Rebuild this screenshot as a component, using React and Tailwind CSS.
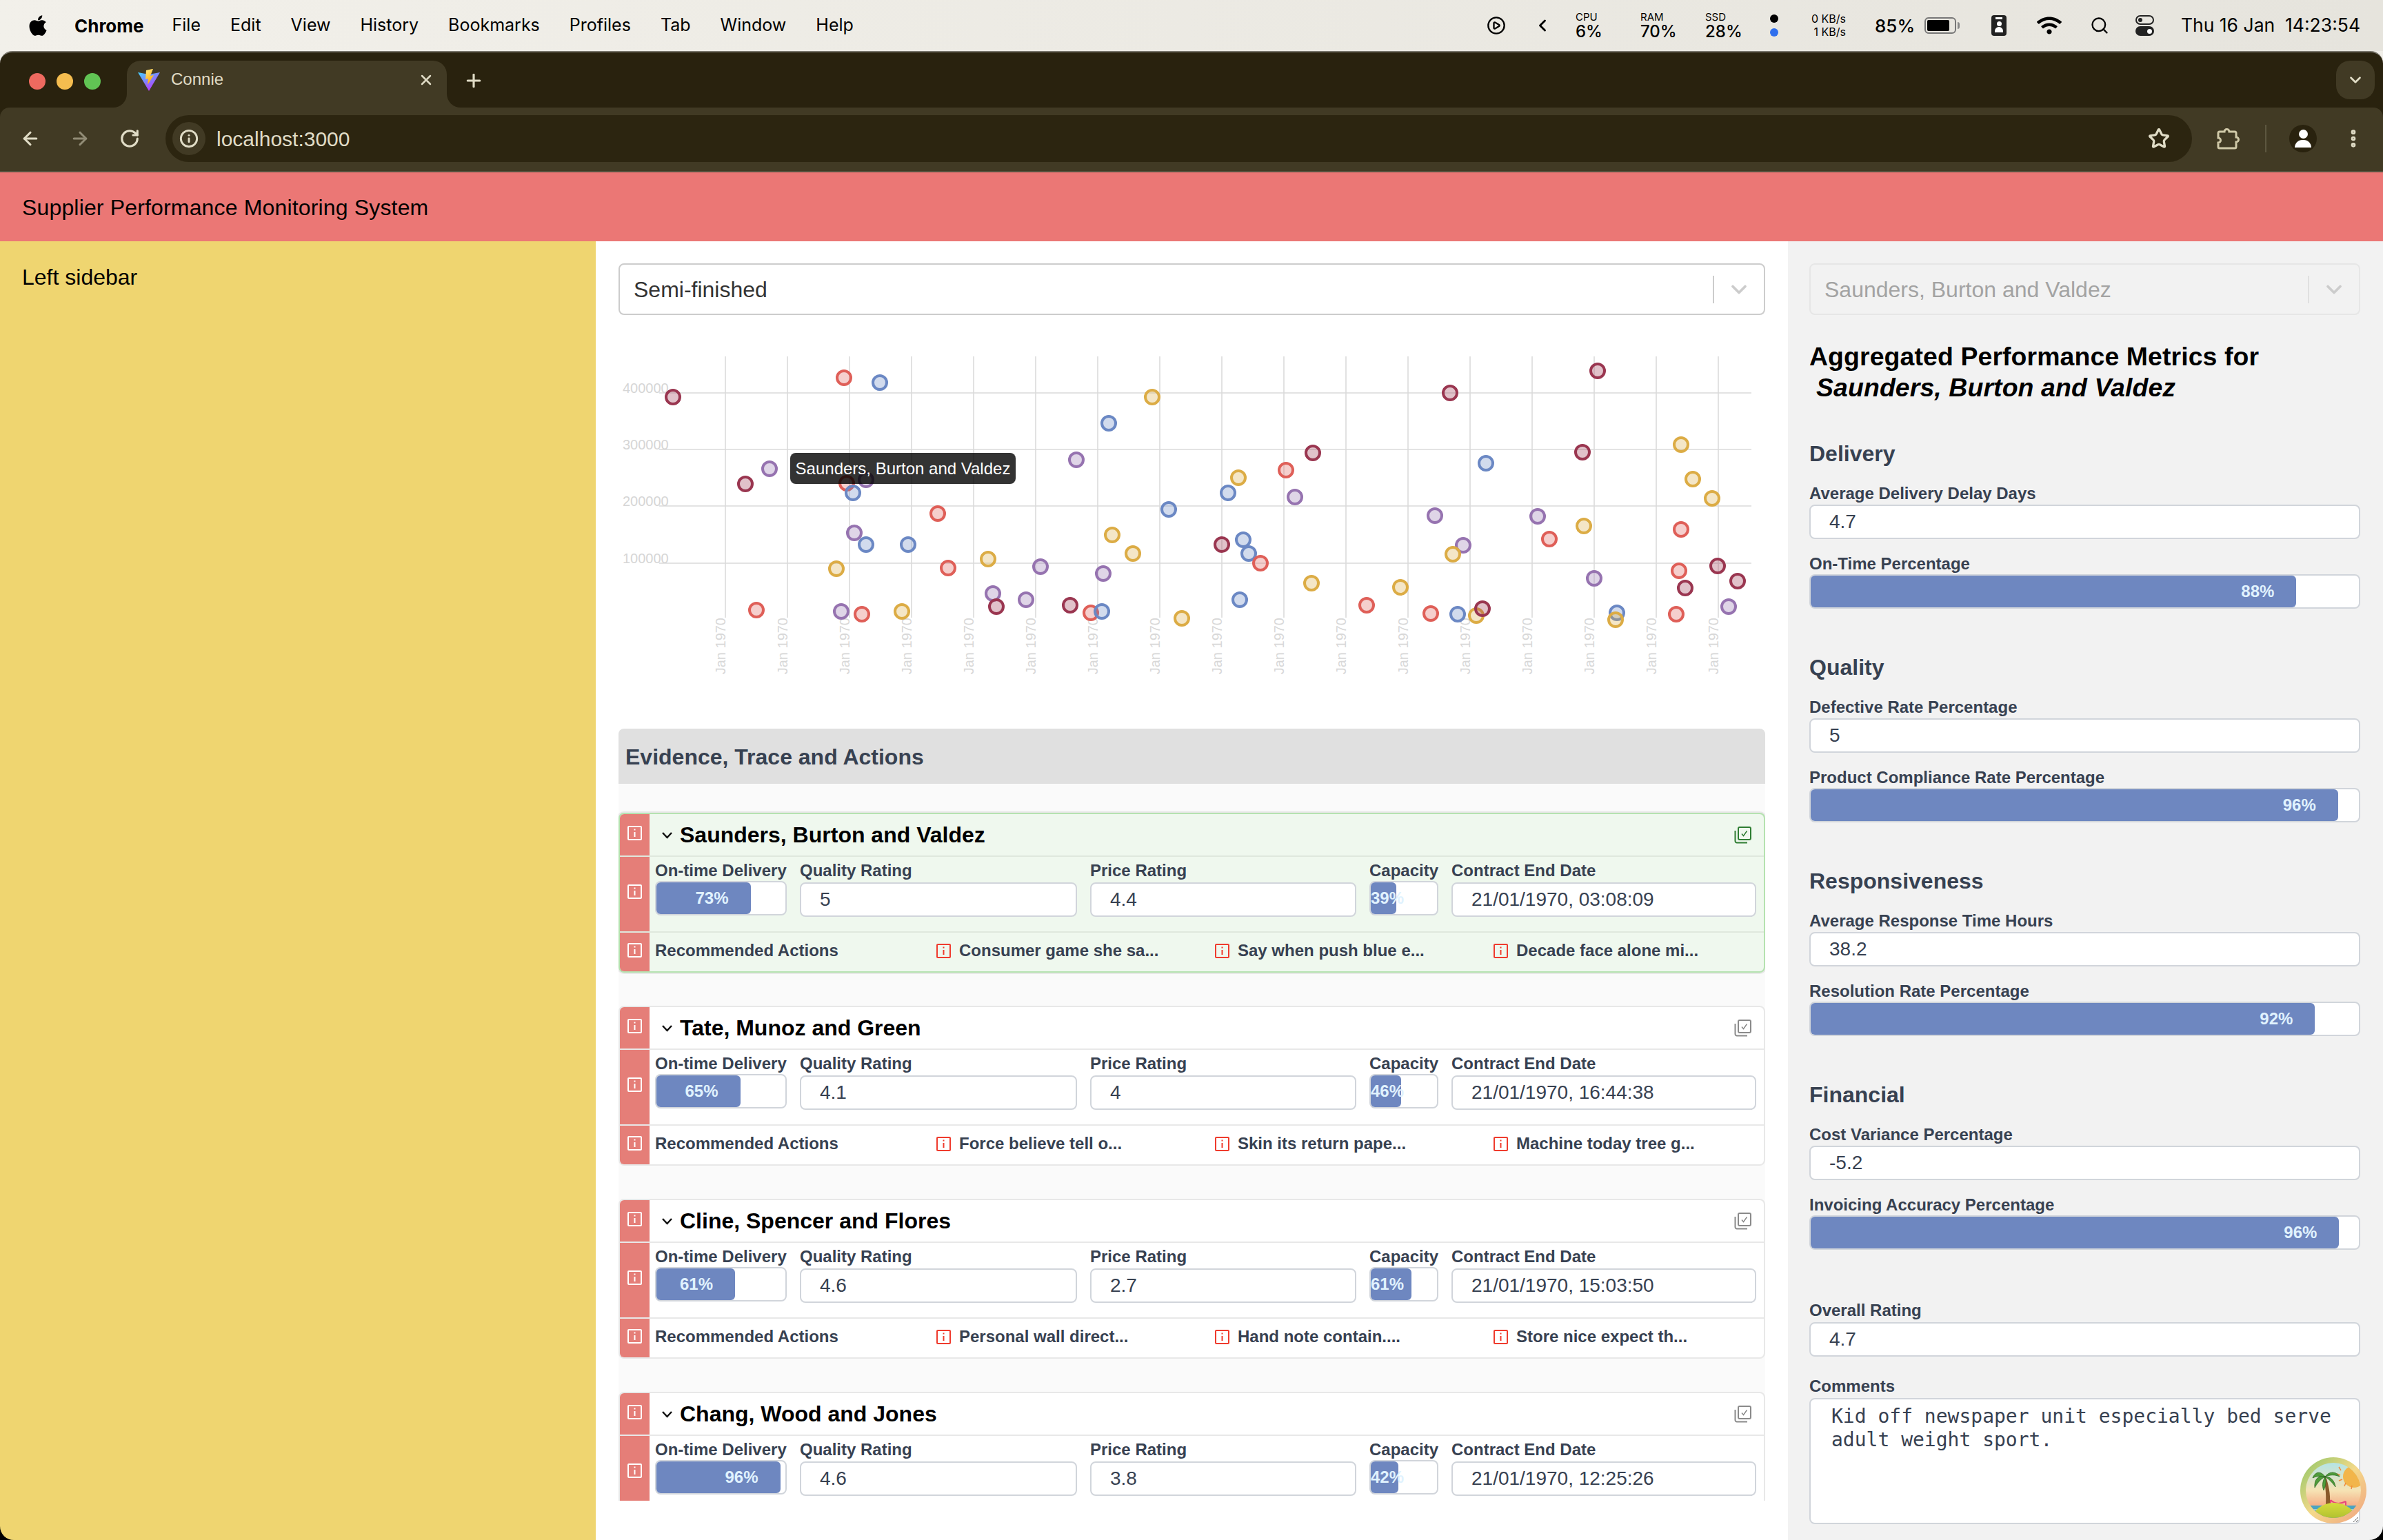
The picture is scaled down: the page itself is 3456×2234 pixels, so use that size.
import { ArrowLeft, ArrowRight, ChevronDown, ChevronLeft, CirclePlay, Ellipsis, Info, Plus, RotateCw, Search, Star, X } from "lucide-react";
import { FaApple, FaWifi } from "react-icons/fa";

const RED = "#df5f58";
const BLUE = "#6b88c4";
const PURPLE = "#9673b0";
const YELLOW = "#dcac45";
const WINE = "#9a3650";

const POINTS = [
  [WINE, 976, 576], [WINE, 1081, 702], [PURPLE, 1116, 680], [RED, 1224, 548], [BLUE, 1276, 555],
  [RED, 1228, 701], [PURPLE, 1256, 696], [BLUE, 1237, 715], [PURPLE, 1239, 773], [BLUE, 1256, 790],
  [BLUE, 1317, 790], [RED, 1360, 745], [RED, 1375, 824], [YELLOW, 1213, 825], [YELLOW, 1433, 811],
  [PURPLE, 1509, 822], [PURPLE, 1600, 832], [PURPLE, 1561, 667], [BLUE, 1608, 614], [YELLOW, 1671, 576],
  [YELLOW, 1613, 776], [YELLOW, 1643, 803], [RED, 1097, 885], [PURPLE, 1220, 887], [RED, 1250, 891],
  [YELLOW, 1308, 887], [PURPLE, 1440, 861], [WINE, 1445, 880], [PURPLE, 1488, 870], [WINE, 1552, 878],
  [RED, 1582, 889], [BLUE, 1598, 887], [YELLOW, 1714, 897], [BLUE, 1695, 739], [BLUE, 1781, 715],
  [YELLOW, 1796, 693], [WINE, 1772, 790], [BLUE, 1803, 783], [BLUE, 1811, 803], [RED, 1828, 817],
  [BLUE, 1798, 870], [RED, 1865, 682], [WINE, 1904, 657], [PURPLE, 1878, 721], [YELLOW, 1902, 846],
  [RED, 1982, 878], [YELLOW, 2031, 852], [RED, 2075, 890], [BLUE, 2114, 891], [YELLOW, 2141, 893],
  [WINE, 2150, 883], [WINE, 2103, 570], [BLUE, 2155, 672], [PURPLE, 2081, 748], [PURPLE, 2122, 791],
  [YELLOW, 2107, 804], [PURPLE, 2230, 749], [RED, 2247, 782], [YELLOW, 2297, 763], [WINE, 2295, 656],
  [WINE, 2317, 538], [PURPLE, 2312, 839], [BLUE, 2345, 889], [YELLOW, 2343, 899], [RED, 2431, 891],
  [RED, 2435, 828], [WINE, 2444, 853], [RED, 2438, 768], [YELLOW, 2438, 645], [YELLOW, 2455, 695],
  [YELLOW, 2483, 723], [WINE, 2491, 821], [WINE, 2520, 843], [PURPLE, 2507, 880],
];

const GRID_X = Array.from({ length: 17 }, (_, i) => 1052 + i * 90);

const SUPPLIERS = [
  {
    name: "Saunders, Burton and Valdez", delivery: 73, quality: "5", price: "4.4", capacity: 39,
    end: "21/01/1970, 03:08:09", selected: true,
    actions: ["Consumer game she sa...", "Say when push blue e...", "Decade face alone mi..."],
  },
  {
    name: "Tate, Munoz and Green", delivery: 65, quality: "4.1", price: "4", capacity: 46,
    end: "21/01/1970, 16:44:38",
    actions: ["Force believe tell o...", "Skin its return pape...", "Machine today tree g..."],
  },
  {
    name: "Cline, Spencer and Flores", delivery: 61, quality: "4.6", price: "2.7", capacity: 61,
    end: "21/01/1970, 15:03:50",
    actions: ["Personal wall direct...", "Hand note contain....", "Store nice expect th..."],
  },
  {
    name: "Chang, Wood and Jones", delivery: 96, quality: "4.6", price: "3.8", capacity: 42,
    end: "21/01/1970, 12:25:26",
    actions: [],
  },
];

const METRICS = [
  { title: "Delivery", first: ["Average Delivery Delay Days", "4.7"], second: ["On-Time Percentage", 88, 88.6] },
  { title: "Quality", first: ["Defective Rate Percentage", "5"], second: ["Product Compliance Rate Percentage", 96, 96.2] },
  { title: "Responsiveness", first: ["Average Response Time Hours", "38.2"], second: ["Resolution Rate Percentage", 92, 92] },
  { title: "Financial", first: ["Cost Variance Percentage", "-5.2"], second: ["Invoicing Accuracy Percentage", 96, 96.4] },
];

function InfoSquare({ color }) {
  return (
    <svg width="21" height="21" viewBox="0 0 21 21" fill="none" stroke={color} strokeWidth="2" className="shrink-0">
      <rect x="1" y="1" width="19" height="19" rx="1" />
      <path d="M10.5 9v7" />
      <path d="M10.5 4.5v2" />
    </svg>
  );
}

function CopyCheck({ color }) {
  return (
    <svg width="25" height="25" viewBox="0 0 25 25" fill="none" stroke={color} strokeWidth="2">
      <rect x="6" y="1" width="18" height="18" rx="2" />
      <path d="M1.5 6v15a2.500 2.500 0 0 0 2.500 2.500h15" />
      <path d="M11 10.500l2.500 3 5-7" strokeWidth="1.500" />
    </svg>
  );
}

function SmallChevron() {
  return (
    <svg width="17" height="11" viewBox="0 0 17 11" fill="none" stroke="#111" strokeWidth="2.500" className="shrink-0">
      <path d="M2 2l6.500 7L15 2" />
    </svg>
  );
}

function Field({ value }) {
  return (
    <div className="flex h-[50px] items-center rounded-lg border-2 border-[#d1d5db] bg-white pl-[27px] text-[28px] text-[#374151]">
      {value}
    </div>
  );
}

function Progress({ value, fill = value }) {
  return (
    <div className="h-[50px] rounded-lg border-2 border-[#d1d5db] bg-white">
      <div
        className="h-full whitespace-nowrap rounded-md bg-[#6e87c0] pr-[32px] text-right text-[24px] leading-[46px] font-bold text-[#e0f2fe]"
        style={{ width: `${fill}%` }}
      >
        {value}%
      </div>
    </div>
  );
}

function SelectBox({ value, muted }) {
  return (
    <div className={`flex h-[75px] items-center rounded-lg border-2 pl-[20px] text-[32px] ${muted ? "border-[#e6e6e6] text-[#a3a3a3]" : "border-[#cccccc] bg-white text-[#333333]"}`}>
      <span className="flex-1">{value}</span>
      <span className={`h-[40px] w-[2px] ${muted ? "bg-[#e0e0e0]" : "bg-[#cccccc]"}`} />
      <ChevronDown size={36} strokeWidth={2.500} className="mx-[18px] text-[#cccccc]" />
    </div>
  );
}

function Chart() {
  return (
    <div className="relative h-[600px] w-[1663px]">
      <svg width="1663" height="600" viewBox="897 458 1663 600" className="block">
        {GRID_X.map((x) => (
          <line key={x} x1={x} x2={x} y1="518" y2="897" stroke="#d8d8d8" strokeWidth="1.500" />
        ))}
        {[571, 653, 735, 818].map((y) => (
          <line key={y} x1="956" x2="2540" y1={y} y2={y} stroke="#dadada" strokeWidth="1.500" />
        ))}
        {[[400000, 571], [300000, 653], [200000, 735], [100000, 818]].map(([label, y]) => (
          <text key={label} x="903" y={y} fontSize="20" fill="#d6d6d6" fontFamily="Liberation Sans">
            {label}
          </text>
        ))}
        {GRID_X.map((x) => (
          <text
            key={x}
            transform={`translate(${x} 897) rotate(-90)`}
            textAnchor="end"
            fontSize="20"
            fill="#d8d8d8"
            fontFamily="Liberation Sans"
          >
            Jan 1970
          </text>
        ))}
        {POINTS.map(([color, x, y], i) => (
          <circle key={i} cx={x} cy={y + 1} r="10" fill={color} fillOpacity="0.3" stroke={color} strokeWidth="4" />
        ))}
      </svg>

      {/* TOOLTIP */}
      <div className="absolute top-[200px] left-[249px] flex h-[45px] w-[327px] items-center justify-center rounded-lg bg-[#000000]/80 text-[24px] whitespace-nowrap text-white">
        Saunders, Burton and Valdez
      </div>
    </div>
  );
}

function SupplierCard({ supplier }) {
  const strip = "flex w-[43px] shrink-0 justify-center bg-[#e57e78]";
  const label = "h-[28px] whitespace-nowrap text-[24px] leading-[28px] font-bold text-[#374151]";

  return (
    <div className={`overflow-hidden rounded-lg border-2 ${supplier.selected ? "border-[#b5e2b0] bg-[#eff8ee] shadow-[0_0_0_2px_#e8e8e8]" : "border-[#e8e8e8] bg-white"}`}>
      {/* HEADER */}
      <div className={`flex h-[62px] border-b-2 ${supplier.selected ? "border-[#dfe8dd]" : "border-[#e8e8e8]"}`}>
        <div className={`${strip} pt-[17px]`}>
          <InfoSquare color="#ffffff" />
        </div>
        <div className="flex flex-1 items-center pr-[18px] pl-[17px]">
          <SmallChevron />
          <span className="ml-[10px] flex-1 text-[32px] font-bold text-black">{supplier.name}</span>
          <CopyCheck color={supplier.selected ? "#2e7d32" : "#8a8a8a"} />
        </div>
      </div>

      {/* STATS */}
      <div className={`flex h-[110px] border-b-2 ${supplier.selected ? "border-[#dfe8dd]" : "border-[#e8e8e8]"}`}>
        <div className={`${strip} pt-[40px]`}>
          <InfoSquare color="#ffffff" />
        </div>
        <div className="flex flex-1 gap-[19px] pt-[6px] pl-[8px]">
          <div className="w-[191px]">
            <div className={label}>On-time Delivery</div>
            <div className="mt-[1px]"><Progress value={supplier.delivery} /></div>
          </div>
          <div className="w-[402px]">
            <div className={label}>Quality Rating</div>
            <div className="mt-[3px]"><Field value={supplier.quality} /></div>
          </div>
          <div className="w-[386px]">
            <div className={label}>Price Rating</div>
            <div className="mt-[3px]"><Field value={supplier.price} /></div>
          </div>
          <div className="w-[100px]">
            <div className={label}>Capacity</div>
            <div className="mt-[1px]"><Progress value={supplier.capacity} /></div>
          </div>
          <div className="w-[442px]">
            <div className={label}>Contract End Date</div>
            <div className="mt-[3px]"><Field value={supplier.end} /></div>
          </div>
        </div>
      </div>

      {/* ACTIONS */}
      {supplier.actions.length > 0 && (
        <div className="flex h-[56px]">
          <div className={`${strip} pt-[15px]`}>
            <InfoSquare color="#ffffff" />
          </div>
          <div className="flex flex-1 items-center pb-[4px] pl-[8px]">
            <div className={`${label} w-[408px]`}>Recommended Actions</div>
            {supplier.actions.map((action) => (
              <div key={action} className="flex w-[404px] items-center gap-[12px]">
                <InfoSquare color="#ef3b2d" />
                <span className={label}>{action}</span>
              </div>
            ))}
          </div>
        </div>
      )}
    </div>
  );
}

function BeachBadge() {
  return (
    <svg width="96" height="96" viewBox="0 0 96 96" className="absolute right-[24px] bottom-[24px]">
      <defs>
        <linearGradient id="ring" x1="0" y1="0" x2="1" y2="1">
          <stop offset="0" stopColor="#8cc665" />
          <stop offset="0.500" stopColor="#f4d98a" />
          <stop offset="1" stopColor="#f0a080" />
        </linearGradient>
        <linearGradient id="sky" x1="0" y1="0" x2="0" y2="1">
          <stop offset="0" stopColor="#a8e4ee" />
          <stop offset="0.500" stopColor="#f6e3b4" />
          <stop offset="0.800" stopColor="#f4a07a" />
        </linearGradient>
        <linearGradient id="hill" x1="0" y1="0" x2="0" y2="1">
          <stop offset="0" stopColor="#d7dc3c" />
          <stop offset="1" stopColor="#7f9e1f" />
        </linearGradient>
        <clipPath id="inner">
          <circle cx="48" cy="48" r="40" />
        </clipPath>
      </defs>
      <circle cx="48" cy="48" r="48" fill="url(#ring)" />
      <g clipPath="url(#inner)">
        <rect width="96" height="96" fill="url(#sky)" />
        <circle cx="78" cy="28" r="16" fill="#f2b54a" />
        <path d="M56 14l3 5M53 24l5 2M56 34l5-2M64 42l2-5M74 46l1-5" stroke="#f08a3c" strokeWidth="1.500" />
        <path d="M34 28c2 14 4 24 3 40h6c1-16-2-28-6-40z" fill="#8a5a2b" />
        <path d="M36 28c-6-8-14-8-18 2 6-3 10-3 18-2zM36 28c-10-2-16 4-15 16 4-7 8-12 15-16zM36 28c-3 6-5 12-2 20 3-7 4-13 2-20zM36 28c6-8 16-8 21 0-7-3-13-3-21 0zM36 28c8 0 14 6 15 15-5-7-9-11-15-15z" fill="#4f9c3a" stroke="#2f6b25" strokeWidth="0.800" />
        <path d="M44 62v8M66 64v6M44 62c6 6 14 6 22 2" stroke="#e8477a" strokeWidth="2" fill="none" />
        <rect y="70" width="96" height="26" fill="#4aa3c2" />
        <path d="M0 76h96M0 82h96" stroke="#e8f4f4" strokeWidth="1" />
        <ellipse cx="49" cy="92" rx="32" ry="26" fill="url(#hill)" />
      </g>
    </svg>
  );
}

function MenuStat({ label, value, className }) {
  return (
    <div className={`flex flex-col text-black ${className}`}>
      <span className="text-[15px] leading-[17px]">{label}</span>
      <span className="text-[24px] leading-[26px] font-medium">{value}</span>
    </div>
  );
}

function MenuBar() {
  return (
    <div className="flex h-[74px] items-center bg-gradient-to-r from-[#f2f0ea] to-[#e6e4dd] pr-[33px] pl-[38px] font-['Inter'] text-[25px] text-black">
      <FaApple size={34} />
      <span className="ml-[36px] text-[26px] font-bold">Chrome</span>
      <div className="ml-[41px] flex gap-[43px]">
        {["File", "Edit", "View", "History", "Bookmarks", "Profiles", "Tab", "Window", "Help"].map((item) => (
          <span key={item}>{item}</span>
        ))}
      </div>

      <div className="ml-auto flex items-center">
        <CirclePlay size={28} strokeWidth={2} />
        <ChevronLeft size={28} strokeWidth={2.500} className="ml-[39px]" />
        <MenuStat label="CPU" value="6%" className="ml-[34px] w-[44px]" />
        <MenuStat label="RAM" value="70%" className="ml-[50px] w-[50px]" />
        <MenuStat label="SSD" value="28%" className="ml-[44px] w-[52px]" />
        <div className="ml-[42px] flex w-[12px] flex-col gap-[8px]">
          <span className="h-[12px] w-[12px] rounded-full bg-black" />
          <span className="h-[12px] w-[12px] rounded-full bg-[#2f6fed]" />
        </div>
        <div className="ml-[42px] w-[56px] text-right text-[16px] leading-[19px]">
          <div>0 KB/s</div>
          <div>1 KB/s</div>
        </div>
        <span className="ml-[42px] w-[60px] text-[26px] font-medium whitespace-nowrap">85%</span>
        <div className="ml-[12px] flex w-[52px] items-center">
          <div className="h-[24px] w-[46px] rounded-[6px] border-2 border-[#777] p-[2px]">
            <div className="h-full w-[84%] rounded-[2px] bg-black" />
          </div>
          <div className="ml-[2px] h-[10px] w-[3px] rounded-r bg-[#888]" />
        </div>
        <div className="ml-[45px] flex h-[30px] w-[22px] flex-col items-center rounded-[4px] bg-[#222] pt-[3px]">
          <span className="h-[3px] w-[10px] bg-white" />
          <span className="mt-[3px] h-[7px] w-[7px] rounded-full bg-white" />
          <span className="mt-[1px] h-[8px] w-[12px] rounded-t-full bg-white" />
        </div>
        <FaWifi size={36} className="ml-[44px]" />
        <Search size={28} strokeWidth={2} className="ml-[41px]" />
        <div className="ml-[38px] flex w-[27px] flex-col gap-[2px]">
          <span className="flex h-[14px] items-center justify-start rounded-full border-2 border-[#222] pl-[2px]"><span className="h-[6px] w-[6px] rounded-full bg-[#222]" /></span>
          <span className="flex h-[14px] items-center justify-end rounded-full bg-[#222] pr-[3px]"><span className="h-[7px] w-[7px] rounded-full bg-white" /></span>
        </div>
        <span className="ml-[37px] w-[262px] text-right text-[26.500px] whitespace-pre">Thu 16 Jan  14:23:54</span>
      </div>
    </div>
  );
}

function ViteIcon() {
  return (
    <svg width="32" height="32" viewBox="0 0 32 32">
      <defs>
        <linearGradient id="viteV" x1="0" y1="0" x2="0.600" y2="1">
          <stop offset="0" stopColor="#41d1ff" />
          <stop offset="1" stopColor="#bd34fe" />
        </linearGradient>
        <linearGradient id="viteB" x1="0" y1="0" x2="0.400" y2="1">
          <stop offset="0" stopColor="#ffea83" />
          <stop offset="1" stopColor="#ffa800" />
        </linearGradient>
      </defs>
      <path d="M0 5l16 3 16-3-16 27z" fill="url(#viteV)" />
      <path d="M21 0L12 2l-1 13 4-1-1 9 9-14-5 1 4-10z" fill="url(#viteB)" />
    </svg>
  );
}

function PuzzleIcon() {
  return (
    <svg width="34" height="34" viewBox="0 0 34 34" fill="none" stroke="#d0c9a8" strokeWidth="3" className="ml-[35px]">
      <path d="M5 7h7a3.500 3.500 0 0 1 7 0h8a2 2 0 0 1 2 2v6a3.500 3.500 0 0 1 0 7v7a2 2 0 0 1-2 2H5a2 2 0 0 1-2-2v-6a3.500 3.500 0 0 0 0-7V9a2 2 0 0 1 2-2z" />
    </svg>
  );
}

function BrowserChrome() {
  const ink = "text-[#e0dcc6]";

  return (
    <div className="bg-[#f0eee8]">
      {/* TAB STRIP */}
      <div className="flex h-[82px] items-end rounded-t-[18px] border-t-2 border-[#77746a] bg-[#29220e] pl-[42px]">
        <div className="mb-[26px] flex gap-[16px]">
          <span className="h-[24px] w-[24px] rounded-full bg-[#ee6a5f]" />
          <span className="h-[24px] w-[24px] rounded-full bg-[#f5bd4f]" />
          <span className="h-[24px] w-[24px] rounded-full bg-[#61c454]" />
        </div>
        <div className={`relative ml-[38px] flex h-[68px] w-[464px] items-center rounded-t-[20px] bg-[#413a24] pr-[18px] pb-[12px] pl-[16px] text-[24px] ${ink}`}>
          <div className="absolute bottom-0 -left-[20px] h-[20px] w-[20px] bg-[#413a24]">
            <div className="h-full w-full rounded-br-[20px] bg-[#29220e]" />
          </div>
          <div className="absolute -right-[20px] bottom-0 h-[20px] w-[20px] bg-[#413a24]">
            <div className="h-full w-full rounded-bl-[20px] bg-[#29220e]" />
          </div>
          <ViteIcon />
          <span className="ml-[16px] flex-1 pb-[2px]">Connie</span>
          <X size={24} strokeWidth={2.500} />
        </div>
        <Plus size={30} strokeWidth={2.500} className={`mb-[24px] ml-[24px] ${ink}`} />
        <div className={`mr-[12px] mb-[12px] ml-auto flex h-[56px] w-[56px] items-center justify-center rounded-[20px] bg-[#413a24] ${ink}`}>
          <ChevronDown size={26} strokeWidth={2.500} />
        </div>
      </div>

      {/* TOOLBAR */}
      <div className="bg-[#29220e]">
        <div className="flex h-[94px] items-center rounded-t-[14px] border-b-2 border-[#57523f] bg-[#413a24] pr-[27px] pb-[2px] pl-[29px]">
          <div className={`flex gap-[42px] ${ink}`}>
            <ArrowLeft size={30} strokeWidth={2.500} />
            <ArrowRight size={30} strokeWidth={2.500} className="opacity-50" />
            <RotateCw size={30} strokeWidth={2.500} />
          </div>
          <div className={`ml-[37px] flex h-[68px] flex-1 items-center rounded-full bg-[#2c2510] pr-[32px] pl-[10px] text-[30px] ${ink}`}>
            <span className="flex h-[48px] w-[48px] items-center justify-center rounded-full bg-[#413a24]">
              <Info size={28} strokeWidth={2.500} />
            </span>
            <span className="ml-[16px] flex-1">localhost:3000</span>
            <Star size={32} strokeWidth={2.500} />
          </div>
          <PuzzleIcon />
          <span className="ml-[37px] h-[40px] w-[2px] bg-[#5d5740]" />
          <div className="ml-[33px] flex h-[40px] w-[40px] flex-col items-center justify-center overflow-hidden rounded-full bg-[#29220e]">
            <span className="h-[13px] w-[13px] rounded-full bg-white" />
            <span className="mt-[2px] h-[11px] w-[24px] rounded-t-full bg-white" />
          </div>
          <Ellipsis size={32} strokeWidth={3} className={`ml-[37px] rotate-90 ${ink}`} />
        </div>
      </div>
    </div>
  );
}

export default function App() {
  const label = "h-[28px] text-[24px] leading-[28px] font-bold text-[#374151]";

  return (
    <div className="relative h-[2234px] w-[3456px] overflow-hidden bg-black font-['Liberation_Sans',sans-serif]">
      <MenuBar />
      <BrowserChrome />

      {/* APP HEADER */}
      <div className="flex h-[100px] items-center bg-[#eb7775] pt-[2px] pl-[32px] text-[32px] tracking-[0.16px] text-black">
        Supplier Performance Monitoring System
      </div>

      <div className="flex h-[1884px] overflow-hidden rounded-b-[20px]">
        {/* LEFT SIDEBAR */}
        <div className="w-[864px] bg-[#efd570] pt-[28px] pl-[32px] text-[32px] text-black">
          Left sidebar
        </div>

        {/* MAIN */}
        <div className="flex w-[1729px] flex-col bg-white px-[33px] pt-[32px]">
          <SelectBox value="Semi-finished" />
          <Chart />
          <div className="flex h-[80px] items-center rounded-t-lg bg-[#e0e0e0] pt-[2px] pl-[10px] text-[32px] font-bold text-[#374151]">
            Evidence, Trace and Actions
          </div>
          <div className="h-[1040px] overflow-hidden bg-[#fafafa] pt-[42px]">
            <div className="flex flex-col gap-[48px]">
              {SUPPLIERS.map((supplier) => (
                <SupplierCard key={supplier.name} supplier={supplier} />
              ))}
            </div>
          </div>
        </div>

        {/* RIGHT PANEL */}
        <div className="w-[863px] bg-[#f2f2f2] pt-[32px] pr-[33px] pl-[31px]">
          <SelectBox value="Saunders, Burton and Valdez" muted />

          <h3 className="mt-[38px] text-[37.440px] leading-[45px] font-bold tracking-[0.1px] text-black">
            Aggregated Performance Metrics for
            <br />
            <em className="pl-[10px]">Saunders, Burton and Valdez</em>
          </h3>

          <div className="mt-[55px] flex flex-col gap-[67px]">
            {METRICS.map((metric) => (
              <section key={metric.title}>
                <h4 className="h-[37px] text-[32px] leading-[37px] font-bold text-[#374151]">{metric.title}</h4>
                <div className={`mt-[25px] ${label}`}>{metric.first[0]}</div>
                <div className="mt-[2px]"><Field value={metric.first[1]} /></div>
                <div className={`mt-[22px] ${label}`}>{metric.second[0]}</div>
                <div className="mt-[1px]"><Progress value={metric.second[1]} fill={metric.second[2]} /></div>
              </section>
            ))}
          </div>

          <div className={`mt-[74px] ${label}`}>Overall Rating</div>
          <div className="mt-[3px]"><Field value="4.7" /></div>
          <div className={`mt-[29px] ${label}`}>Comments</div>
          <textarea
            readOnly
            className="mt-[3px] block h-[183px] w-full rounded-lg border-2 border-[#d1d5db] bg-white pt-[8px] pr-[20px] pl-[30px] font-['DejaVu_Sans_Mono',monospace] text-[28px] leading-[34px] text-[#374151]"
            defaultValue="Kid off newspaper unit especially bed serve adult weight sport."
          />
        </div>
      </div>

      <BeachBadge />
    </div>
  );
}
